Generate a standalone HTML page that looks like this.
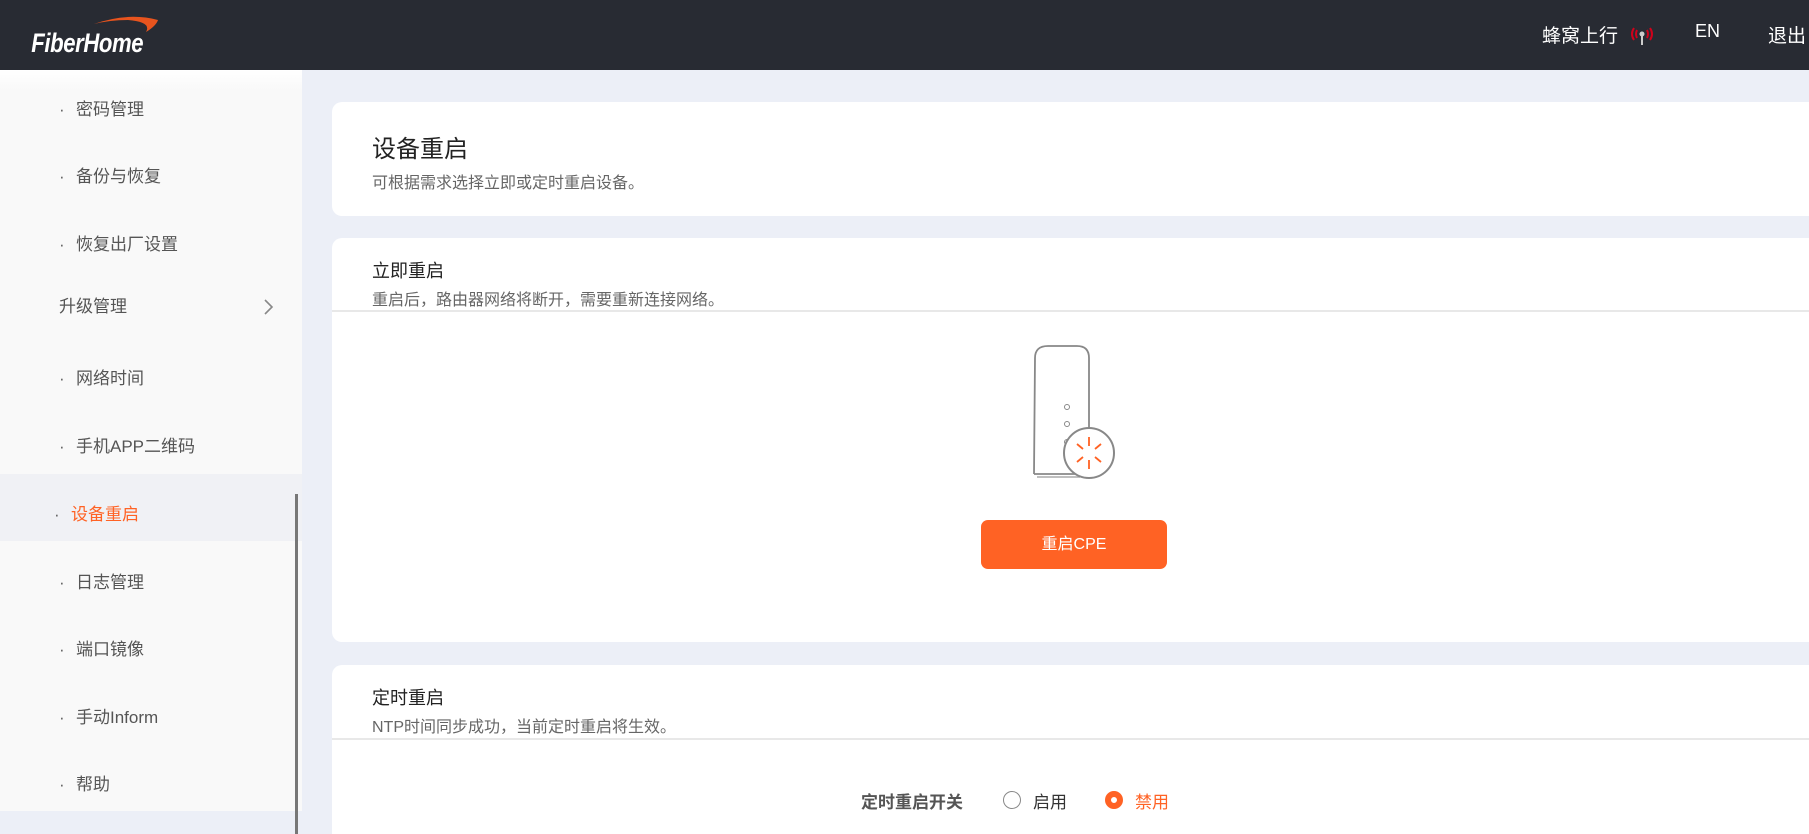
<!DOCTYPE html>
<html><head><meta charset="utf-8"><style>
*{margin:0;padding:0;box-sizing:border-box}
html{width:1809px;height:834px;overflow:hidden}
body{width:1809px;height:834px;overflow:hidden;background:#eceff7;font-family:"Liberation Sans","Noto Sans CJK SC",sans-serif;position:relative}
.hdr{position:absolute;left:0;top:0;width:1809px;height:70px;background:#282b33}
.hdr .t{position:absolute;top:21px;color:#fff;font-size:19px}
.side{position:absolute;left:0;top:70px;width:302px;height:741px;background:#f9f9f9}
.side .top{position:absolute;left:0;top:0;width:302px;height:20px;background:linear-gradient(#fff,#f9f9f9)}
.it{position:absolute;left:76px;font-size:17px;color:#555;line-height:20px}
.it.b:before{content:"·";position:absolute;left:-17px;color:#666}
.card{position:absolute;left:332px;width:1477px;background:#fff;border-radius:10px 0 0 10px}
.h{position:absolute;left:40px;color:#222}
.s{position:absolute;left:40px;color:#666;font-size:16px;line-height:18px}
.div{position:absolute;left:0;right:0;height:2px;background:#e8e8e8}
</style></head><body>
<div class="hdr">
<svg style="position:absolute;left:28px;top:10px" width="140" height="48"><path d="M66 14 Q100 2 130 10 Q128 16 118 22 Q124 12 100 10 Q82 10 66 14 Z" fill="#e8541e"/><text x="4" y="42" font-family="Liberation Sans" font-style="italic" font-weight="bold" font-size="27" fill="#fff" transform="scale(0.82,1)" letter-spacing="-0.5">FiberHome</text></svg>
<span class="t" style="left:1542px">蜂窝上行</span>
<svg style="position:absolute;left:1629px;top:24px" width="26" height="22"><path d="M5 4 Q1 10 5 16 M21 4 Q25 10 21 16 M8 6 Q6 10 8 14 M18 6 Q20 10 18 14" stroke="#d0021b" stroke-width="2" fill="none"/><circle cx="13" cy="10" r="2.5" fill="#ccc"/><line x1="13" y1="10" x2="13" y2="21" stroke="#ccc" stroke-width="2"/></svg>
<span class="t" style="left:1695px;font-size:18px">EN</span>
<span class="t" style="left:1768px">退出</span>
</div>
<div class="side"><div class="top"></div>
<div class="it b" style="top:30px">密码管理</div>
<div class="it b" style="top:97px">备份与恢复</div>
<div class="it b" style="top:165px">恢复出厂设置</div>
<div class="it" style="top:227px;left:59px">升级管理</div>
<svg style="position:absolute;left:263px;top:228px" width="12" height="18"><path d="M2 2 L9 9 L2 16" stroke="#888" stroke-width="1.6" fill="none"/></svg>
<div class="it b" style="top:299px">网络时间</div>
<div class="it b" style="top:367px">手机APP二维码</div>
<div style="position:absolute;left:0;top:404px;width:302px;height:67px;background:#f0f1f5"></div>
<div class="it b" style="top:435px;left:71px;color:#ff6224">设备重启</div>
<div class="it b" style="top:503px">日志管理</div>
<div class="it b" style="top:570px">端口镜像</div>
<div class="it b" style="top:638px">手动Inform</div>
<div class="it b" style="top:705px">帮助</div>
</div>
<div style="position:absolute;left:295px;top:494px;width:3px;height:340px;background:#777"></div>
<div class="card" style="top:102px;height:114px">
<div class="h" style="top:27px;font-size:24px">设备重启</div>
<div class="s" style="top:73px">可根据需求选择立即或定时重启设备。</div></div>
<div class="card" style="top:238px;height:404px">
<div class="h" style="top:19px;font-size:18px">立即重启</div>
<div class="s" style="top:54px">重启后，路由器网络将断开，需要重新连接网络。</div>
<div class="div" style="top:72px"></div>
<svg style="position:absolute;left:688px;top:104px" width="100" height="140"><path d="M14 132 L15 16 Q15 4 28 4 L57 4 Q69 4 69 16 L69 90" stroke="#888" stroke-width="1.8" fill="none"/><path d="M14 132 L62 132" stroke="#888" stroke-width="1.8" fill="none"/><line x1="17" y1="135" x2="60" y2="135" stroke="#aaa" stroke-width="1.5"/><circle cx="47" cy="65" r="2.5" stroke="#888" fill="none"/><circle cx="47" cy="82" r="2.5" stroke="#888" fill="none"/><circle cx="47" cy="100" r="2.5" stroke="#888" fill="none"/><ellipse cx="69" cy="111" rx="25" ry="25" stroke="#888" stroke-width="2" fill="#fff"/><g stroke="#ff6224" stroke-width="1.8"><line x1="69" y1="95" x2="69" y2="104"/><line x1="69" y1="118" x2="69" y2="127"/><line x1="57" y1="102" x2="63" y2="107"/><line x1="81" y1="102" x2="75" y2="107"/><line x1="57" y1="120" x2="63" y2="115"/><line x1="81" y1="120" x2="75" y2="115"/></g></svg>
<div style="position:absolute;left:649px;top:282px;width:186px;height:49px;background:#ff6224;border-radius:7px;color:#fff;font-size:16px;text-align:center;line-height:49px">重启CPE</div></div>
<div class="card" style="top:665px;height:169px;border-radius:10px 0 0 0">
<div class="h" style="top:19px;font-size:18px">定时重启</div>
<div class="s" style="top:54px">NTP时间同步成功，当前定时重启将生效。</div>
<div class="div" style="top:73px"></div>
<div style="position:absolute;left:529px;top:123px;font-size:17px;font-weight:bold;color:#555">定时重启开关</div>
<div style="position:absolute;left:671px;top:126px;width:18px;height:18px;border:1.5px solid #888;border-radius:50%"></div>
<div style="position:absolute;left:701px;top:123px;font-size:17px;color:#333">启用</div>
<div style="position:absolute;left:773px;top:126px;width:18px;height:18px;border:6px solid #ff6224;border-radius:50%;background:#fff"></div>
<div style="position:absolute;left:803px;top:123px;font-size:17px;color:#ff6224">禁用</div>
</div>
</body></html>
